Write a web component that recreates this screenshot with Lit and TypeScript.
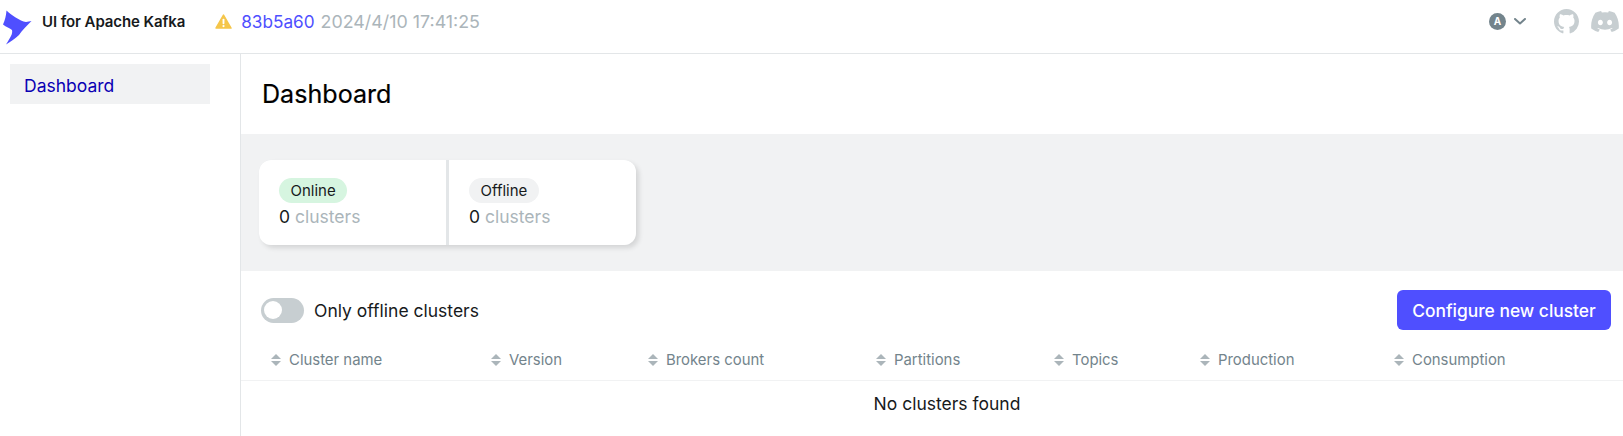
import { LitElement, html, css } from "lit";
import { customElement } from "lit/decorators.js";

const sortIcon = html`<svg class="sort" width="10" height="12" viewBox="0 0 10 12"><path d="M5 0 10 5H0Z" fill="#abb5ba"/><path d="M5 12 0 7H10Z" fill="#abb5ba"/></svg>`;
const cols = ["Cluster name", "Version", "Brokers count", "Partitions", "Topics", "Production", "Consumption"];

@customElement("app-root")
export class AppRoot extends LitElement {
  static styles = css`
    :host { display: block; font-family: Inter, "Liberation Sans", sans-serif; color: #171a1c; height: 436px; overflow: hidden; background: #fff; }
    .nav { height: 54px; box-sizing: border-box; border-bottom: 1px solid #e3e6e8; display: flex; align-items: center; padding: 0 4px 11px 3px; }
    .logo { margin-top: 13px; flex: none; }
    .brand { font-size: 15px; font-weight: 600; margin-left: 8px; color: #171a1c; letter-spacing: -0.1px; }
    .warn { margin-left: 30px; margin-right: 9px; flex: none; }
    .commit { font-size: 17.2px; color: #4f4fff; }
    .date { font-size: 17.85px; color: #abb5ba; margin-left: 6px; }
    .spacer { flex: 1; }
    .user { display: flex; align-items: center; gap: 8px; margin-right: 28px; }
    .avatar { width: 17px; height: 17px; border-radius: 50%; background: #73848c; color: #fff; font-size: 10px; font-weight: 700; display: flex; align-items: center; justify-content: center; }
    .social { display: flex; gap: 12px; align-items: center; }
    .body { display: flex; height: 382px; }
    .side { width: 241px; box-sizing: border-box; border-right: 1px solid #e3e6e8; padding: 10px 30px 0 10px; flex: none; }
    .item { height: 40px; background: #f1f2f3; color: #0a00b3; font-size: 17.5px; line-height: 43px; padding-left: 14px; overflow: hidden; }
    .main { flex: 1; min-width: 0; }
    h1 { margin: 0; height: 80px; box-sizing: border-box; padding: 0 0 0 21px; font-size: 25.1px; font-weight: 400; line-height: 80px; color: #000; -webkit-text-stroke: 0.2px #000; }
    .band { background: #f1f2f3; height: 137px; padding: 26px 0 0 18px; box-sizing: border-box; }
    .cards { display: inline-flex; gap: 3px; background: #e3e6e8; border-radius: 12px; box-shadow: 3px 3px 5px rgba(0,0,0,.12); height: 85px; }
    .card { background: #fff; padding: 18px 0 0 20px; box-sizing: border-box; height: 85px; width: 187px; }
    .card.a { border-radius: 12px 0 0 12px; }
    .card.b { border-radius: 0 12px 12px 0; }
    .pill { display: inline-block; height: 25px; line-height: 25px; padding: 0 11.5px; border-radius: 13px; font-size: 15px; font-weight: 400; }
    .pill.on { background: #d6f5e0; }
    .pill.off { background: #f1f2f3; }
    .count { font-size: 17.5px; line-height: 20px; margin-top: 4px; color: #171a1c; }
    .count span { color: #abb5ba; }
    .ctl { display: flex; align-items: center; justify-content: space-between; height: 40px; margin-top: 19px; padding: 0 12px 0 20px; }
    .tg { display: flex; align-items: center; gap: 10px; font-size: 17.5px; }
    .toggle { width: 43px; height: 25px; border-radius: 13px; background: #c7ced1; position: relative; }
    .toggle::after { content: ""; position: absolute; left: 3px; top: 3.5px; width: 18px; height: 18px; border-radius: 50%; background: #fff; }
    button { height: 40px; width: 214px; border: 0; border-radius: 6px; background: #4f4fff; color: #fff; font: 500 17.4px Inter, "Liberation Sans", sans-serif; padding: 0; }
    .head { display: grid; grid-template-columns: 220px 157px 228px 178px 146px 194px 1fr; padding: 20px 0 10px 30px; border-bottom: 1px solid #f1f2f3; align-items: center; line-height: 20px; }
    .th { display: flex; align-items: center; gap: 8px; font-size: 14.9px; color: #73848c; font-weight: 400; }
    .sort { flex: none; }
    .empty { text-align: center; font-size: 17.5px; line-height: 46px; color: #171a1c; padding-left: 30px; }
  `;

  render() {
    return html`
      <div class="nav">
        <svg class="logo" width="31" height="36" viewBox="3 6 31 36"><path d="M6.5 6.5 C11 11 20 17 26 18 L31.5 17 C27 22 22 26 19 31 C15 35 10 38 6 40.5 C10 34 13 30 12 26 C10 24 6 23 3 20.5 C5 16 6 12 6.5 6.5Z" fill="#4f4fff"/></svg>
        <span class="brand">UI for Apache Kafka</span>
        <svg class="warn" width="17" height="15" viewBox="0 0 18 16"><path d="M9 1.2 17 15H1Z" fill="#f5c64a" stroke="#f5c64a" stroke-width="1.6" stroke-linejoin="round"/><rect x="8" y="5" width="2" height="5.8" rx=".9" fill="#fff"/><circle cx="9" cy="12.9" r="1.2" fill="#fff"/></svg>
        <span class="commit">83b5a60</span><span class="date">2024/4/10 17:41:25</span>
        <div class="spacer"></div>
        <div class="user">
          <div class="avatar">A</div>
          <svg width="12" height="7" viewBox="0 0 12 7"><path d="M1 1 6 5.5 11 1" fill="none" stroke="#73848c" stroke-width="2" stroke-linecap="round" stroke-linejoin="round"/></svg>
        </div>
        <div class="social">
          <svg width="25" height="25" viewBox="0 0 16 16"><path fill="#c7ced1" d="M8 0C3.58 0 0 3.58 0 8c0 3.54 2.29 6.53 5.47 7.59.4.07.55-.17.55-.38 0-.19-.01-.82-.01-1.49-2.01.37-2.53-.49-2.69-.94-.09-.23-.48-.94-.82-1.13-.28-.15-.68-.52-.01-.53.63-.01 1.08.58 1.23.82.72 1.21 1.87.87 2.33.66.07-.52.28-.87.51-1.07-1.78-.2-3.64-.89-3.64-3.95 0-.87.31-1.59.82-2.15-.08-.2-.36-1.02.08-2.12 0 0 .67-.21 2.2.82.64-.18 1.32-.27 2-.27s1.36.09 2 .27c1.53-1.04 2.2-.82 2.2-.82.44 1.1.16 1.92.08 2.12.51.56.82 1.27.82 2.15 0 3.07-1.87 3.75-3.65 3.95.29.25.54.73.54 1.48 0 1.07-.01 1.93-.01 2.2 0 .21.15.46.55.38A8.01 8.01 0 0 0 16 8c0-4.42-3.58-8-8-8Z"/></svg>
          <svg width="28" height="21" viewBox="0 0 127.14 96.36"><path fill="#c7ced1" d="M107.7 8.07A105.15 105.15 0 0 0 81.47 0a72.06 72.06 0 0 0-3.36 6.83 97.68 97.68 0 0 0-29.11 0A72.37 72.37 0 0 0 45.64 0a105.89 105.89 0 0 0-26.25 8.09C2.79 32.65-1.71 56.6.54 80.21a105.73 105.73 0 0 0 32.17 16.15 77.7 77.7 0 0 0 6.89-11.11 68.42 68.42 0 0 1-10.85-5.18c.91-.66 1.8-1.34 2.66-2a75.57 75.57 0 0 0 64.32 0c.87.71 1.76 1.39 2.66 2a68.68 68.68 0 0 1-10.87 5.19 77 77 0 0 0 6.89 11.1 105.25 105.25 0 0 0 32.19-16.14c2.64-27.38-4.51-51.11-18.9-72.15ZM42.45 65.69C36.18 65.69 31 60 31 53s5-12.74 11.43-12.74S54 46 53.89 53s-5.05 12.69-11.44 12.69Zm42.24 0C78.41 65.69 73.25 60 73.25 53s5-12.74 11.44-12.74S96.23 46 96.12 53s-5.04 12.69-11.43 12.69Z"/></svg>
        </div>
      </div>
      <div class="body">
        <div class="side"><div class="item">Dashboard</div></div>
        <div class="main">
          <h1>Dashboard</h1>
          <div class="band">
            <div class="cards">
              <div class="card a"><span class="pill on">Online</span><div class="count">0 <span>clusters</span></div></div>
              <div class="card b"><span class="pill off">Offline</span><div class="count">0 <span>clusters</span></div></div>
            </div>
          </div>
          <div class="ctl">
            <div class="tg"><div class="toggle"></div>Only offline clusters</div>
            <button>Configure new cluster</button>
          </div>
          <div class="head">${cols.map((c) => html`<div class="th">${sortIcon}<span>${c}</span></div>`)}</div>
          <div class="empty">No clusters found</div>
        </div>
      </div>
    `;
  }
}
